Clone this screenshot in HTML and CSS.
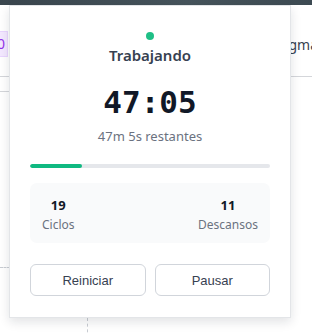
FILE: index.html
```html
<!DOCTYPE html>
<html lang="es">
<head>
<meta charset="utf-8">
<link rel="stylesheet" href="styles.css">
</head>
<body>
<div class="backdrop">
  <div class="topbar"></div>
  <div class="toolbar">
    <span class="chip">0</span>
    <span class="label">Figma</span>
  </div>
  <div class="rule"></div>
  <div class="rule short"></div>
  <div class="dash-h"></div>
  <div class="dash-v"></div>
</div>

<div class="card">
  <div class="dot"></div>
  <div class="status">Trabajando</div>
  <div class="time">47:05</div>
  <div class="remaining">47m 5s restantes</div>
  <div class="progress"><div class="fill" style="width:21.7%"></div></div>
  <div class="stats">
    <div class="stat"><div class="num">19</div><div class="cap">Ciclos</div></div>
    <div class="stat"><div class="num">11</div><div class="cap">Descansos</div></div>
  </div>
  <div class="actions">
    <button class="btn">Reiniciar</button>
    <button class="btn">Pausar</button>
  </div>
</div>
</body>
</html>
```
FILE: styles.css
```css
html, body {
  margin: 0;
  padding: 0;
  background: #ffffff;
  font-family: "Noto Sans", "Liberation Sans", sans-serif;
  overflow: hidden;
}
.backdrop {
  width: 312px;
  height: 333px;
}
.topbar {
  height: 5px;
  background: linear-gradient(90deg, #3a464e, #46545c 60%, #3d4a52);
}
.toolbar {
  margin-top: 26px;
  height: 26px;
  display: flex;
  justify-content: space-between;
  align-items: center;
}
.chip {
  width: 8px;
  height: 26px;
  box-sizing: border-box;
  background: #f3e8ff;
  border: 1px solid #e9d5ff;
  border-left: none;
  color: #9333ea;
  font-size: 14px;
  line-height: 24px;
  text-indent: -3px;
  overflow: hidden;
}
.label {
  color: #374151;
  font-size: 14px;
  margin-right: -6px;
}
.rule {
  margin-top: 19px;
  height: 1px;
  background: #d4d6da;
}
.rule.short {
  margin-top: 14px;
  width: 20px;
}
.dash-h {
  margin-top: 175px;
  width: 10px;
  border-top: 1px dashed #c8ccd2;
}
.dash-v {
  margin-top: 50px;
  margin-left: 87px;
  height: 20px;
  border-left: 1px dashed #c8ccd2;
}
.card {
  position: absolute;
  left: 9px;
  top: 5px;
  width: 240px;
  padding: 26px 20px 21px;
  background: #ffffff;
  border: 1px solid #e3e5e8;
  box-shadow: 0 4px 10px rgba(15, 23, 42, 0.12);
  display: flex;
  flex-direction: column;
  align-items: stretch;
}
.dot {
  width: 8px;
  height: 8px;
  border-radius: 50%;
  background: #1fbf86;
  align-self: center;
}
.status {
  margin-top: 4px;
  text-align: center;
  font-size: 15px;
  font-weight: 600;
  line-height: 22px;
  color: #374151;
}
.time {
  margin-top: 18px;
  text-align: center;
  font-family: "DejaVu Sans Mono", "Liberation Mono", monospace;
  font-weight: bold;
  font-size: 31px;
  line-height: 36px;
  color: #111827;
}
.remaining {
  margin-top: 7px;
  text-align: center;
  font-size: 13px;
  line-height: 18px;
  color: #6b7280;
}
.progress {
  margin-top: 19px;
  height: 4px;
  border-radius: 2px;
  background: #e5e7eb;
  overflow: hidden;
}
.fill {
  height: 100%;
  background: #10b981;
  border-radius: 2px;
}
.stats {
  margin-top: 15px;
  height: 60px;
  box-sizing: border-box;
  padding: 13px 12px 9px;
  background: #f9fafb;
  border-radius: 7px;
  display: flex;
  justify-content: space-between;
}
.stat {
  text-align: center;
}
.num {
  font-size: 13px;
  font-weight: 700;
  line-height: 18px;
  color: #111827;
}
.cap {
  margin-top: 1px;
  font-size: 12px;
  line-height: 20px;
  color: #6b7280;
}
.actions {
  margin-top: 21px;
  display: grid;
  grid-template-columns: 1fr 1fr;
  gap: 9px;
}
.btn {
  height: 32px;
  background: #ffffff;
  border: 1px solid #d1d5db;
  border-radius: 6px;
  font-family: "Liberation Sans", Arial, sans-serif;
  font-size: 13px;
  color: #374151;
  padding: 0;
}
```
